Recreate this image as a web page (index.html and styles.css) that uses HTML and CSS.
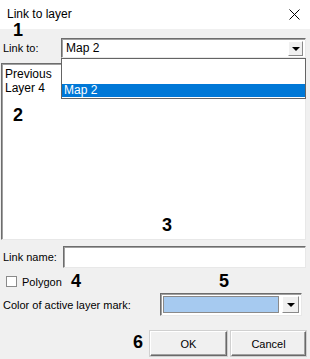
FILE: index.html
```html
<!DOCTYPE html>
<html lang="en">
<head>
    <meta charset="UTF-8">
    <meta name="viewport" content="width=device-width, initial-scale=1.0">
    <title>Link to layer</title>
    <link rel="stylesheet" href="styles.css">
</head>
<body>

    <div class="dialog">
        <!-- Title bar -->
        <div class="titlebar">
            <span class="title">Link to layer</span>
            <svg class="close" width="11" height="11" viewBox="0 0 11 11">
                <path d="M0.5 0.5 L10.5 10.5 M10.5 0.5 L0.5 10.5" stroke="#000" stroke-width="1"/>
            </svg>
        </div>

        <div class="content">
            <span class="mark mark-1">1</span>

            <!-- Link to -->
            <div class="row row-link">
                <label class="label label-wide">Link to:</label>
                <div class="combo combo-link">
                    <span class="combo-value">Map 2</span>
                    <span class="combo-btn"><span class="arrow"></span></span>
                    <div class="dropdown">
                        <div class="option"></div>
                        <div class="option selected">Map 2</div>
                    </div>
                </div>
            </div>

            <!-- Layer list -->
            <div class="listbox">
                <div class="list-item">Previous</div>
                <div class="list-item">Layer 4</div>
                <span class="mark mark-2">2</span>
                <span class="mark mark-3">3</span>
            </div>

            <!-- Link name -->
            <div class="row row-name">
                <label class="label label-wide">Link name:</label>
                <input class="textbox" type="text">
            </div>

            <!-- Polygon -->
            <div class="row row-check">
                <span class="checkbox"></span>
                <span class="check-label">Polygon</span>
                <span class="mark mark-4">4</span>
                <span class="mark mark-5">5</span>
            </div>

            <!-- Color -->
            <div class="row row-color">
                <label class="label">Color of active layer mark:</label>
                <div class="combo combo-color">
                    <span class="swatch"></span>
                    <span class="combo-btn"><span class="arrow"></span></span>
                </div>
            </div>

            <!-- Buttons -->
            <div class="row row-buttons">
                <span class="mark mark-6">6</span>
                <button class="btn btn-ok">OK</button>
                <button class="btn btn-cancel">Cancel</button>
            </div>
        </div>
    </div>

</body>
</html>
```

FILE: styles.css
```css
/* General */
body {
    margin: 0;
    font-family: "Liberation Sans", Arial, sans-serif;
    font-size: 11px;
    color: #000;
    background: #f0f0f0;
}

.dialog {
    width: 310px;
    height: 359px;
    background: #f0f0f0;
}

/* Title bar */
.titlebar {
    height: 29px;
    background: #fff;
    display: flex;
    align-items: center;
    justify-content: space-between;
    padding: 0 10px 0 7px;
}

.title {
    font-size: 12px;
    margin-top: -1px;
}

.close {
    display: block;
    margin-top: -1px;
}

/* Content */
.content {
    position: relative;
    padding: 9px 4px 0 1px;
}

.row {
    display: flex;
    align-items: center;
}

.label {
    margin-left: 2px;
}

.label-wide {
    width: 58px;
    flex-shrink: 0;
}

/* Combo boxes */
.combo {
    position: relative;
    display: flex;
    align-items: center;
    background: #fff;
    border: 1px solid;
    border-color: #6d6d6d #e8e8e8 #e8e8e8 #6d6d6d;
    box-shadow: inset 1px 1px 0 #a0a0a0;
    box-sizing: border-box;
}

.combo-link {
    flex: 1;
    height: 20px;
}

.combo-value {
    flex: 1;
    padding-left: 4px;
    font-size: 12px;
}

.combo-btn {
    width: 15px;
    height: 15px;
    margin-right: 2px;
    background: #f0f0f0;
    border: 1px solid;
    border-color: #fff #8a8a8a #8a8a8a #fff;
    box-sizing: border-box;
    display: flex;
    align-items: center;
    justify-content: center;
}

.arrow {
    width: 0;
    height: 0;
    border-left: 4px solid transparent;
    border-right: 4px solid transparent;
    border-top: 4px solid #000;
    margin-top: 1px;
}

/* Open dropdown list over the list box */
.dropdown {
    position: absolute;
    top: 19px;
    left: -1px;
    right: -1px;
    height: 41px;
    background: #fff;
    border: 1px solid #646464;
    box-sizing: border-box;
    z-index: 2;
    display: flex;
    flex-direction: column;
    justify-content: flex-end;
    padding-bottom: 1px;
}

.option {
    height: 13px;
    line-height: 13px;
    padding-left: 2px;
    font-size: 12px;
}

.option.selected {
    background: #0078d7;
    color: #fff;
}

/* List box */
.listbox {
    position: relative;
    height: 177px;
    margin-top: 5px;
    background: #fff;
    border: 1px solid;
    border-color: #6d6d6d #e8e8e8 #e8e8e8 #6d6d6d;
    box-shadow: inset 1px 1px 0 #a0a0a0;
    box-sizing: border-box;
    padding: 3px 0 0 3px;
}

.list-item {
    font-size: 12px;
    line-height: 14px;
}

/* Link name */
.row-name {
    margin-top: 6px;
}

.textbox {
    flex: 1;
    height: 22px;
    margin: 0 0 0 2px;
    padding: 0;
    background: #fff;
    border: 1px solid;
    border-color: #6d6d6d #e8e8e8 #e8e8e8 #6d6d6d;
    box-shadow: inset 1px 1px 0 #a0a0a0;
    box-sizing: border-box;
}

/* Checkbox */
.row-check {
    position: relative;
    margin-top: 7px;
    height: 13px;
}

.checkbox {
    width: 11px;
    height: 11px;
    margin-left: 5px;
    background: #fff;
    border: 1px solid #8a8a8a;
    box-sizing: border-box;
}

.check-label {
    margin-left: 5px;
}

/* Color */
.row-color {
    margin-top: 5px;
}

.combo-color {
    width: 142px;
    height: 23px;
    margin-left: auto;
    margin-right: 4px;
}

.swatch {
    flex: 1;
    height: 17px;
    margin: 0 3px 0 2px;
    background: #a6caf0;
    border: 1px solid #8a8a8a;
    box-sizing: border-box;
}

.combo-color .combo-btn {
    height: 17px;
    width: 17px;
}

/* Buttons */
.row-buttons {
    position: relative;
    margin-top: 15px;
    justify-content: flex-end;
    gap: 4px;
}

.btn {
    height: 25px;
    padding: 0;
    font-family: "Liberation Sans", Arial, sans-serif;
    font-size: 11px;
    background: #f0f0f0;
    border: 1px solid;
    border-color: #fff #696969 #696969 #fff;
    box-shadow: inset -1px -1px 0 #a0a0a0, 0 0 0 1px #d0d0d0;
}

.btn-ok {
    width: 77px;
}

.btn-cancel {
    width: 75px;
}

/* Numbered callouts */
.mark {
    position: absolute;
    font-family: "Liberation Sans", Arial, sans-serif;
    font-weight: bold;
    font-size: 18px;
    line-height: 18px;
    z-index: 3;
}

.mark-1 { left: 13px; top: -8px; }
.mark-2 { left: 11px; top: 42px; }
.mark-3 { left: 160px; top: 152px; }
.mark-4 { left: 70px; top: -3px; }
.mark-5 { left: 218px; top: -3px; }
.mark-6 { left: 132px; top: 2px; }
```
